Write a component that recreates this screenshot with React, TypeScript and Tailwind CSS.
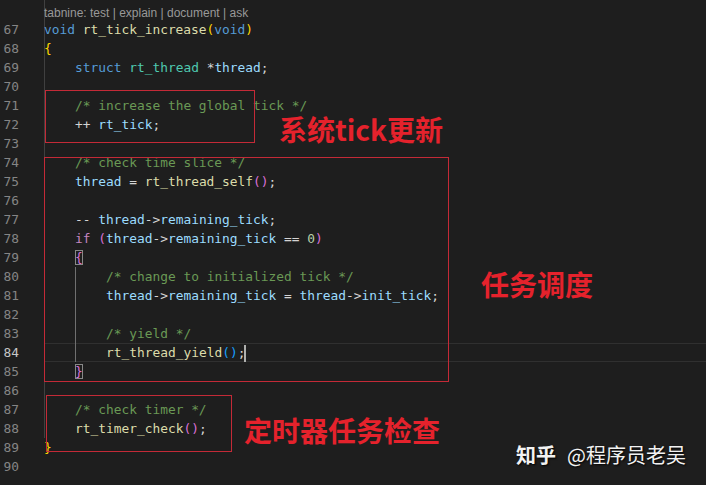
import type { ReactNode } from "react"

type Tok = [string, string]

const C = {
  kw: "#569cd6",
  ctrl: "#c586c0",
  type: "#4ec9b0",
  fn: "#dcdcaa",
  v: "#9cdcfe",
  op: "#d4d4d4",
  num: "#b5cea8",
  cm: "#6a9955",
  b1: "#ffd700",
  b2: "#da70d6",
  b3: "#179fff",
}

type Line = {
  n: number
  indent: number
  guide: boolean
  current?: boolean
  match?: boolean
  cursor?: boolean
  toks: Tok[]
}

const lines: Line[] = [
  { n: 67, indent: 0, guide: true, toks: [["void", C.kw], [" ", C.op], ["rt_tick_increase", C.fn], ["(", C.b1], ["void", C.kw], [")", C.b1]] },
  { n: 68, indent: 0, guide: true, toks: [["{", C.b1]] },
  { n: 69, indent: 1, guide: true, toks: [["struct", C.kw], [" ", C.op], ["rt_thread", C.type], [" *", C.op], ["thread", C.v], [";", C.op]] },
  { n: 70, indent: 1, guide: true, toks: [] },
  { n: 71, indent: 1, guide: true, toks: [["/* increase the global tick */", C.cm]] },
  { n: 72, indent: 1, guide: true, toks: [["++ ", C.op], ["rt_tick", C.v], [";", C.op]] },
  { n: 73, indent: 1, guide: true, toks: [] },
  { n: 74, indent: 1, guide: true, toks: [["/* check time slice */", C.cm]] },
  { n: 75, indent: 1, guide: true, toks: [["thread", C.v], [" = ", C.op], ["rt_thread_self", C.fn], ["()", C.b2], [";", C.op]] },
  { n: 76, indent: 1, guide: true, toks: [] },
  { n: 77, indent: 1, guide: true, toks: [["-- ", C.op], ["thread", C.v], ["->", C.op], ["remaining_tick", C.v], [";", C.op]] },
  { n: 78, indent: 1, guide: true, toks: [["if", C.ctrl], [" ", C.op], ["(", C.b2], ["thread", C.v], ["->", C.op], ["remaining_tick", C.v], [" == ", C.op], ["0", C.num], [")", C.b2]] },
  { n: 79, indent: 1, guide: true, match: true, toks: [["{", C.b2]] },
  { n: 80, indent: 2, guide: true, toks: [["/* change to initialized tick */", C.cm]] },
  { n: 81, indent: 2, guide: true, toks: [["thread", C.v], ["->", C.op], ["remaining_tick", C.v], [" = ", C.op], ["thread", C.v], ["->", C.op], ["init_tick", C.v], [";", C.op]] },
  { n: 82, indent: 2, guide: true, toks: [] },
  { n: 83, indent: 2, guide: true, toks: [["/* yield */", C.cm]] },
  { n: 84, indent: 2, guide: true, current: true, cursor: true, toks: [["rt_thread_yield", C.fn], ["()", C.b3], [";", C.op]] },
  { n: 85, indent: 1, guide: true, match: true, toks: [["}", C.b2]] },
  { n: 86, indent: 1, guide: true, toks: [] },
  { n: 87, indent: 1, guide: true, toks: [["/* check timer */", C.cm]] },
  { n: 88, indent: 1, guide: true, toks: [["rt_timer_check", C.fn], ["()", C.b2], [";", C.op]] },
  { n: 89, indent: 0, guide: false, toks: [["}", C.b1]] },
  { n: 90, indent: 0, guide: false, toks: [] },
]

function CodeLine({ line }: { line: Line }) {
  const chunks: ReactNode[] = []
  for (let i = 0; i < line.indent; i++) {
    chunks.push(
      <span
        key={"i" + i}
        className={
          i === 1
            ? "inline-block w-[31px] h-[19px] align-top shadow-[inset_1px_0_0_#707070]"
            : "inline-block w-[31px] h-[19px] align-top"
        }
      />
    )
  }
  let bg = ""
  if (line.current) bg = "shadow-[inset_1px_0_0_#404040,inset_0_1px_0_#303030,inset_0_-1px_0_#303030]"
  else if (line.guide) bg = "shadow-[inset_1px_0_0_#404040]"
  return (
    <div className="flex h-[19px] leading-[19px]">
      <div
        className={
          line.current
            ? "w-[19px] text-right text-[#c6c6c6]"
            : "w-[19px] text-right text-[#858585]"
        }
      >
        {line.n}
      </div>
      <div className={"ml-[25px] flex-1 whitespace-pre " + bg}>
        {chunks}
        {line.toks.map(([t, c], i) => (
          <span
            key={i}
            style={{ color: c }}
            className={line.match ? "outline outline-1 outline-[#888888] -outline-offset-1" : ""}
          >
            {t}
          </span>
        ))}
        {line.cursor && <span className="inline-block w-[2px] h-[17px] bg-[#aeafad] align-middle -ml-[1px]" />}
      </div>
    </div>
  )
}

export default function App() {
  return (
    <div className="relative w-[706px] h-[485px] overflow-hidden bg-[#1e1e1e]">
      <div className="font-['DejaVu_Sans_Mono',monospace] text-[12.87px]">
        <div className="flex h-[20px]">
          <div className="w-[44px]" />
          <div className="flex-1 shadow-[inset_1px_0_0_#404040] font-['Liberation_Sans',sans-serif] text-[12px] leading-[26px] text-[#999999]">
            tabnine: test | explain | document | ask
          </div>
        </div>
        {lines.map((l) => (
          <CodeLine key={l.n} line={l} />
        ))}
      </div>

      {/* annotations drawn over the code */}
      <div className="absolute left-[45px] top-[90px] w-[210px] h-[53px] border border-[#c42a37]" />
      <div className="absolute left-[44px] top-[157px] w-[405px] h-[225px] border border-[#c42a37]" />
      <div className="absolute left-[46px] top-[395px] w-[186px] h-[57px] border border-[#c42a37]" />

      <div className="absolute left-[279px] top-[115px] font-['Noto_Sans_CJK_SC',sans-serif] font-bold text-[28px] leading-[28px] text-[#e5222c]">
        系统tick更新
      </div>
      <div className="absolute left-[481px] top-[270px] font-['Noto_Sans_CJK_SC',sans-serif] font-bold text-[28px] leading-[28px] text-[#e5222c]">
        任务调度
      </div>
      <div className="absolute left-[244px] top-[416px] font-['Noto_Sans_CJK_SC',sans-serif] font-bold text-[28px] leading-[28px] text-[#e5222c]">
        定时器任务检查
      </div>

      <div className="absolute left-[516px] top-[444px] flex items-center gap-[11px] font-['Noto_Sans_CJK_SC',sans-serif] text-[20px] leading-[22px] text-[#f2f2f2] [text-shadow:1px_1px_2px_#000]">
        <span className="font-bold">知乎</span>
        <span>@程序员老吴</span>
      </div>
    </div>
  )
}
